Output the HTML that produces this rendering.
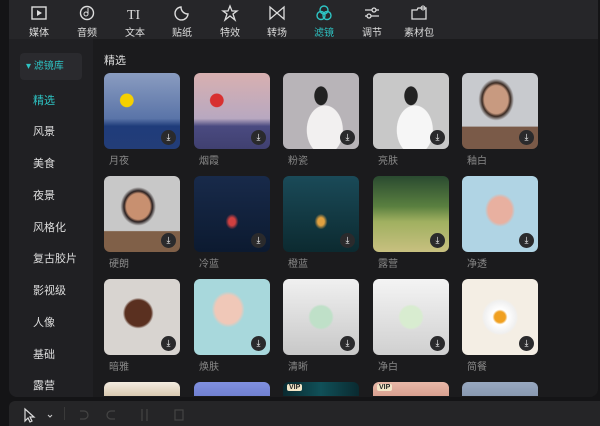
<!DOCTYPE html><html><head><meta charset="utf-8"><style>
*{margin:0;padding:0;box-sizing:border-box}
body{width:600px;height:426px;background:#141416;font-family:"Liberation Sans","Noto Sans CJK SC",sans-serif;position:relative;overflow:hidden;color:#ccc}
.frame{position:absolute;left:9px;top:0;width:589px;height:397px;background:#1b1b1d;border-radius:0 0 8px 8px;overflow:hidden}
.top{position:absolute;left:0;top:0;width:589px;height:39px;background:#262629}
.tab{position:absolute;top:4px;width:40px;text-align:center;font-size:10px;color:#ddd}
.tab svg{display:block;margin:0 auto 2px;width:18px;height:18px}
.side{position:absolute;left:0;top:39px;width:84px;height:358px;background:#202023}
.lib{position:absolute;left:11px;top:14px;width:62px;height:27px;background:#2a2a2e;border-radius:4px;color:#2ec4c4;font-size:10px;line-height:27px;padding-left:6px}
.si{position:absolute;left:24px;font-size:11px;color:#ddd}
.h{position:absolute;left:95px;top:52px;font-size:11px;color:#ddd}
.t{position:absolute;width:76px;height:76px;border-radius:6px;overflow:hidden}
.dl{position:absolute;right:4px;bottom:4px;width:15px;height:15px;border-radius:50%;background:#2a2a2c;color:#fff;font-size:9px;text-align:center;line-height:15px}
.lb{position:absolute;font-size:10px;color:#888}
.bot{position:absolute;left:9px;top:401px;width:591px;height:25px;background:#252527;border-radius:6px 0 0 0}
.vip{position:absolute;left:4px;top:2px;background:#f2e6c8;color:#222;font-size:7px;font-weight:bold;padding:0 2px;border-radius:2px}
</style></head><body>
<div class="frame">
<div class="top">
<div class="tab" style="left:10px"><svg viewBox="0 0 18 18"><rect x="2" y="3" width="14" height="12" fill="none" stroke="#ddd" stroke-width="1.4"/><path d="M7 6l5 3-5 3z" fill="#ddd"/></svg>媒体</div>
<div class="tab" style="left:58px"><svg viewBox="0 0 18 18"><circle cx="9" cy="9" r="6.5" fill="none" stroke="#ddd" stroke-width="1.4"/><circle cx="8" cy="10" r="2" fill="none" stroke="#ddd"/><path d="M10 10V4" stroke="#ddd"/></svg>音频</div>
<div class="tab" style="left:106px"><svg viewBox="0 0 18 18"><text x="1" y="15" font-size="14" fill="#ddd" font-family="Liberation Serif">TI</text></svg>文本</div>
<div class="tab" style="left:153px"><svg viewBox="0 0 18 18"><path d="M15 10A6.5 6.5 0 1 1 8 3c0 4 3 7 7 7z" fill="none" stroke="#ddd" stroke-width="1.4"/></svg>贴纸</div>
<div class="tab" style="left:201px"><svg viewBox="0 0 18 18"><path d="M9 2l2 5h5l-4 3 2 6-5-4-5 4 2-6-4-3h5z" fill="none" stroke="#ddd" stroke-width="1.3"/></svg>特效</div>
<div class="tab" style="left:248px"><svg viewBox="0 0 18 18"><path d="M2 3v12l14-12v12z" fill="none" stroke="#ddd" stroke-width="1.3"/></svg>转场</div>
<div class="tab" style="left:295px;color:#2ec4c4"><svg viewBox="0 0 18 18"><g fill="none" stroke="#2ec4c4" stroke-width="1.4"><circle cx="9" cy="6" r="4"/><circle cx="6" cy="11.5" r="4"/><circle cx="12" cy="11.5" r="4"/></g></svg>滤镜</div>
<div class="tab" style="left:343px"><svg viewBox="0 0 18 18"><g stroke="#ddd" stroke-width="1.3" fill="none"><path d="M2 6h14M2 12h14"/><circle cx="11" cy="6" r="2" fill="#262629"/><circle cx="6" cy="12" r="2" fill="#262629"/></g></svg>调节</div>
<div class="tab" style="left:390px"><svg viewBox="0 0 18 18"><path d="M2 6h5l1-2h8v11H2z" fill="none" stroke="#ddd" stroke-width="1.3"/><circle cx="13" cy="4" r="2" fill="none" stroke="#ddd"/></svg>素材包</div>
</div>
<div class="side">
<div class="lib">▾ 滤镜库</div>
<div class="si" style="top:53px;color:#2ec4c4">精选</div>
<div class="si" style="top:84px">风景</div>
<div class="si" style="top:116px">美食</div>
<div class="si" style="top:148px">夜景</div>
<div class="si" style="top:180px">风格化</div>
<div class="si" style="top:211px">复古胶片</div>
<div class="si" style="top:243px">影视级</div>
<div class="si" style="top:275px">人像</div>
<div class="si" style="top:307px">基础</div>
<div class="si" style="top:338px">露营</div>
</div>
<div class="h">精选</div>
</div>
<div id="g"></div>
<div class="bot"><svg width="200" height="25" style="position:absolute;left:8px;top:0"><path d="M8 8v12l3-3 2 4 2-1-2-4h4z" fill="none" stroke="#ddd" stroke-width="1.2"/><path d="M31 14l2 2 2-2" stroke="#ccc" fill="none"/>
<g stroke="#444" fill="none" stroke-width="1.2"><path d="M63 10h4a4 4 0 0 1 0 8h-4"/><path d="M98 10h-4a4 4 0 0 0 0 8h4"/><path d="M125 8v12M130 8v12"/><rect x="158" y="9" width="8" height="10"/></g></svg>
<div style="position:absolute;left:55px;top:6px;width:1px;height:13px;background:#3a3a3a"></div></div>
<script>
const xs=[104,194,283,373,462],ys=[73,176,279,382];
const d=[
["月夜","radial-gradient(circle at 30% 36%,#f5d000 9%,transparent 10%),linear-gradient(#8a9cc0,#5a74a8 60%,#1f3c7a 70%,#233d78)"],
["烟霞","radial-gradient(circle at 30% 36%,#d83030 9%,transparent 10%),linear-gradient(#d8b0b0,#b8a8c0 60%,#4a4a80 70%,#404070)"],
["粉瓷","radial-gradient(ellipse at 50% 30%,#222 12%,transparent 13%),radial-gradient(ellipse at 55% 75%,#f2f0f0 30%,transparent 31%),#b8b4b8"],
["亮肤","radial-gradient(ellipse at 50% 30%,#222 12%,transparent 13%),radial-gradient(ellipse at 55% 75%,#f6f6f6 30%,transparent 31%),#c8c8c8"],
["釉白","radial-gradient(ellipse at 45% 35%,#c89a80 20%,#3a2a22 24%,transparent 30%),linear-gradient(transparent 70%,#7a5a48 71%),#c8cace"],
["硬朗","radial-gradient(ellipse at 45% 40%,#c89070 20%,#2a2020 24%,transparent 30%),linear-gradient(transparent 72%,#806048 73%),#c8c8c8"],
["冷蓝","radial-gradient(ellipse at 50% 60%,#d04040 6%,transparent 12%),linear-gradient(#182a4a,#0c1a30)"],
["橙蓝","radial-gradient(ellipse at 50% 60%,#e0a040 6%,transparent 12%),linear-gradient(#1a4a58,#0c2a30)"],
["露营","linear-gradient(#2a4a30,#5a8040 40%,#a0b060 60%,#c8c080)"],
["净透","radial-gradient(ellipse at 50% 45%,#e8b0a0 22%,transparent 28%),#b0d4e4"],
["暗雅","radial-gradient(ellipse at 45% 45%,#5a3020 22%,transparent 26%),#d8d4d0"],
["焕肤","radial-gradient(ellipse at 45% 40%,#f0c8b8 22%,transparent 28%),#a8d8dc"],
["清晰","radial-gradient(ellipse at 50% 50%,#bfe0c8 20%,transparent 24%),linear-gradient(#f0f0f0,#c8c8c8)"],
["净白","radial-gradient(ellipse at 50% 50%,#d8ecd0 20%,transparent 24%),linear-gradient(#f4f4f4,#d0d0d0)"],
["简餐","radial-gradient(circle at 50% 50%,#f0a020 10%,#fff 14%,#f0f0f0 30%,transparent 34%),#f4eee4"],
["","linear-gradient(#f4ece0,#d8c8b0)"],["","linear-gradient(#8090e0,#7080d0)"],["","linear-gradient(90deg,#0a2a30,#105058,#0a2a30)"],["","linear-gradient(#e8b8a8,#d8a090)"],["","linear-gradient(#98a8c0,#8898b0)"]];
let h="";
d.forEach((v,i)=>{const x=xs[i%5],y=ys[Math.floor(i/5)];const r=Math.floor(i/5);
h+=`<div class="t" style="left:${x}px;top:${y}px;${r==3?'height:14px;border-radius:6px 6px 0 0;':''}background:${v[1]}">${r<3?'<div class="dl">⤓</div>':''}${(i==17||i==18)?'<div class="vip">VIP</div>':''}</div>`;
if(v[0])h+=`<div class="lb" style="left:${x+5}px;top:${y+79}px">${v[0]}</div>`;});
document.getElementById('g').innerHTML=h;
</script>
</body></html>
